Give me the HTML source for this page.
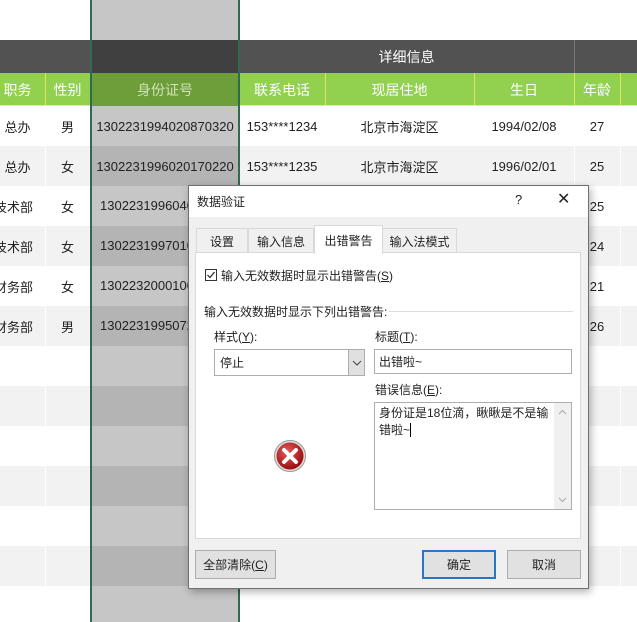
<!DOCTYPE html><html><head><meta charset="utf-8"><style>
*{margin:0;padding:0;box-sizing:border-box}
body{width:637px;height:622px;overflow:hidden;background:#fff;position:relative;font-family:"Liberation Sans","Noto Sans CJK SC",sans-serif;font-size:13px;color:#222}
.a{position:absolute}
.c{position:absolute;display:flex;align-items:center;justify-content:center;white-space:nowrap}
.btn{position:absolute;background:#e1e1e1;border:1px solid #adadad;display:flex;align-items:center;justify-content:center;font-size:12px;color:#222}
</style></head><body>
<!-- rows -->
<div class="a" style="left:0;top:146px;width:637px;height:40px;background:#f2f2f2"></div>
<div class="a" style="left:0;top:226px;width:637px;height:40px;background:#f2f2f2"></div>
<div class="a" style="left:0;top:306px;width:637px;height:40px;background:#f2f2f2"></div>
<div class="a" style="left:0;top:386px;width:637px;height:40px;background:#f2f2f2"></div>
<div class="a" style="left:0;top:466px;width:637px;height:40px;background:#f2f2f2"></div>
<div class="a" style="left:0;top:546px;width:637px;height:40px;background:#f2f2f2"></div>
<!-- column dividers in body -->
<div class="a" style="left:45px;top:106px;width:1px;height:516px;background:#fff"></div>
<div class="a" style="left:574px;top:106px;width:1px;height:516px;background:#fff"></div>
<div class="a" style="left:620px;top:106px;width:1px;height:516px;background:#fff"></div>
<!-- header -->
<div class="a" style="left:0;top:40px;width:637px;height:33px;background:#525252"></div>
<div class="a" style="left:0;top:73px;width:637px;height:33px;background:#92d050"></div>
<div class="a" style="left:574px;top:40px;width:1px;height:33px;background:#777"></div>
<div class="c" style="left:239px;top:40px;width:335px;height:33px;color:#fff;font-size:14px">详细信息</div>
<div class="a" style="left:45px;top:73px;width:1px;height:33px;background:#d8e860"></div>
<div class="a" style="left:325px;top:73px;width:1px;height:33px;background:#d8e860"></div>
<div class="a" style="left:474px;top:73px;width:1px;height:33px;background:#d8e860"></div>
<div class="a" style="left:574px;top:73px;width:1px;height:33px;background:#d8e860"></div>
<div class="a" style="left:620px;top:73px;width:1px;height:33px;background:#d8e860"></div>
<div class="a" style="left:0;top:105px;width:637px;height:1px;background:#e8f060"></div>
<!-- selected column -->
<div class="a" style="left:90px;top:0;width:150px;height:622px;background:#c6c6c6;border-left:2px solid #2f6b4f;border-right:2px solid #2f6b4f"></div>
<div class="a" style="left:92px;top:146px;width:146px;height:40px;background:#b4b4b4"></div>
<div class="a" style="left:92px;top:226px;width:146px;height:40px;background:#b4b4b4"></div>
<div class="a" style="left:92px;top:306px;width:146px;height:40px;background:#b4b4b4"></div>
<div class="a" style="left:92px;top:386px;width:146px;height:40px;background:#b4b4b4"></div>
<div class="a" style="left:92px;top:466px;width:146px;height:40px;background:#b4b4b4"></div>
<div class="a" style="left:92px;top:546px;width:146px;height:40px;background:#b4b4b4"></div>
<div class="a" style="left:92px;top:40px;width:146px;height:33px;background:#404040"></div>
<div class="a" style="left:92px;top:73px;width:146px;height:33px;background:#6e9e3a"></div>
<!-- header texts -->
<div class="c" style="left:-10px;top:73px;width:55px;height:33px;color:#fff;font-size:14px">职务</div>
<div class="c" style="left:45px;top:73px;width:45px;height:33px;color:#fff;font-size:14px">性别</div>
<div class="c" style="left:92px;top:73px;width:146px;height:33px;color:#cfe3b5;font-size:14px">身份证号</div>
<div class="c" style="left:239px;top:73px;width:86px;height:33px;color:#fff;font-size:14px">联系电话</div>
<div class="c" style="left:325px;top:73px;width:149px;height:33px;color:#fff;font-size:14px">现居住地</div>
<div class="c" style="left:474px;top:73px;width:100px;height:33px;color:#fff;font-size:14px">生日</div>
<div class="c" style="left:574px;top:73px;width:46px;height:33px;color:#fff;font-size:14px">年龄</div>
<!-- data -->
<div class="c" style="left:-10px;top:106px;width:55px;height:40px">总办</div>
<div class="c" style="left:45px;top:106px;width:45px;height:40px">男</div>
<div class="c" style="left:92px;top:106px;width:146px;height:40px">130223199402087032​0</div>
<div class="c" style="left:239px;top:106px;width:86px;height:40px">153****1234</div>
<div class="c" style="left:325px;top:106px;width:149px;height:40px">北京市海淀区</div>
<div class="c" style="left:474px;top:106px;width:100px;height:40px">1994/02/08</div>
<div class="c" style="left:574px;top:106px;width:46px;height:40px">27</div>
<div class="c" style="left:-10px;top:146px;width:55px;height:40px">总办</div>
<div class="c" style="left:45px;top:146px;width:45px;height:40px">女</div>
<div class="c" style="left:92px;top:146px;width:146px;height:40px">130223199602017022​0</div>
<div class="c" style="left:239px;top:146px;width:86px;height:40px">153****1235</div>
<div class="c" style="left:325px;top:146px;width:149px;height:40px">北京市海淀区</div>
<div class="c" style="left:474px;top:146px;width:100px;height:40px">1996/02/01</div>
<div class="c" style="left:574px;top:146px;width:46px;height:40px">25</div>
<div class="c" style="left:-18px;top:186px;width:63px;height:40px">技术部</div>
<div class="c" style="left:45px;top:186px;width:45px;height:40px">女</div>
<div class="a" style="left:100px;top:198px">1302231996040</div>
<div class="c" style="left:574px;top:186px;width:46px;height:40px">25</div>
<div class="c" style="left:-18px;top:226px;width:63px;height:40px">技术部</div>
<div class="c" style="left:45px;top:226px;width:45px;height:40px">女</div>
<div class="a" style="left:100px;top:238px">1302231997010</div>
<div class="c" style="left:574px;top:226px;width:46px;height:40px">24</div>
<div class="c" style="left:-18px;top:266px;width:63px;height:40px">财务部</div>
<div class="c" style="left:45px;top:266px;width:45px;height:40px">女</div>
<div class="a" style="left:100px;top:278px">1302232000100</div>
<div class="c" style="left:574px;top:266px;width:46px;height:40px">21</div>
<div class="c" style="left:-18px;top:306px;width:63px;height:40px">财务部</div>
<div class="c" style="left:45px;top:306px;width:45px;height:40px">男</div>
<div class="a" style="left:100px;top:318px">1302231995072</div>
<div class="c" style="left:574px;top:306px;width:46px;height:40px">26</div>
<!-- dialog -->
<div class="a" style="left:188px;top:185px;width:401px;height:404px;background:#f0f0f0;border:1px solid #707070;box-shadow:2px 3px 8px rgba(0,0,0,.3)">
 <div class="a" style="left:0;top:0;width:399px;height:31px;background:#fff"></div>
 <div class="a" style="left:8px;top:7px;font-size:12px">数据验证</div>
 <div class="a" style="left:326px;top:6px;font-size:13px">?</div>
 <div class="a" style="left:368px;top:3px;font-size:16px">✕</div>
 <!-- tabs -->
 <div class="c" style="left:7px;top:42px;width:52px;height:25px;border:1px solid #d9d9d9;border-bottom:none;font-size:12px;background:#f0f0f0">设置</div>
 <div class="c" style="left:59px;top:42px;width:66px;height:25px;border:1px solid #d9d9d9;border-bottom:none;font-size:12px">输入信息</div>
 <div class="c" style="left:193px;top:42px;width:75px;height:25px;border:1px solid #d9d9d9;border-bottom:none;font-size:12px">输入法模式</div>
 <div class="a" style="left:6px;top:66px;width:386px;height:287px;background:#fff;border:1px solid #d9d9d9"></div>
 <div class="c" style="left:125px;top:39px;width:69px;height:29px;border:1px solid #d9d9d9;border-bottom:none;background:#fff;font-size:12px">出错警告</div>
 <div class="a" style="left:16px;top:83px;width:12px;height:12px;border:1px solid #333;background:#fff"><svg width="10" height="10" style="position:absolute;left:0;top:0"><path d="M1.5 5 L4 7.5 L8.5 2" stroke="#222" stroke-width="1.2" fill="none"/></svg></div>
 <div class="a" style="left:32px;top:81px;font-size:12px">输入无效数据时显示出错警告(<u>S</u>)</div>
 <div class="a" style="left:15px;top:117px;font-size:12px">输入无效数据时显示下列出错警告:</div>
 <div class="a" style="left:200px;top:125px;width:184px;height:1px;background:#dcdcdc"></div>
 <div class="a" style="left:25px;top:142px;font-size:12px">样式(<u>Y</u>):</div>
 <div class="a" style="left:25px;top:163px;width:151px;height:27px;border:1px solid #adadad;background:#e9e9e9"></div>
 <div class="a" style="left:26px;top:164px;width:133px;height:25px;background:#fff"></div>
 <div class="a" style="left:31px;top:168px;font-size:12px">停止</div>
 <div class="a" style="left:159px;top:164px;width:16px;height:25px;background:#e0e0e0;border-left:1px solid #adadad"><svg width="16" height="25"><path d="M4 11 L8 15 L12 11" stroke="#444" fill="none"/></svg></div>
 <div class="a" style="left:186px;top:142px;font-size:12px">标题(<u>T</u>):</div>
 <div class="a" style="left:185px;top:163px;width:198px;height:25px;border:1px solid #adadad;background:#fff"></div>
 <div class="a" style="left:190px;top:167px;font-size:12px">出错啦~</div>
 <div class="a" style="left:186px;top:195px;font-size:12px">错误信息(<u>E</u>):</div>
 <div class="a" style="left:185px;top:216px;width:198px;height:108px;border:1px solid #adadad;background:#fff"></div>
 <div class="a" style="left:365px;top:217px;width:17px;height:106px;background:#f0f0f0"><svg width="17" height="106"><path d="M5 11 L8.5 7.5 L12 11 M5 95 L8.5 98.5 L12 95" stroke="#aaa" fill="none"/></svg></div>
 <div class="a" style="left:190px;top:219px;width:176px;font-size:12px;line-height:17px">身份证是18位滴，瞅瞅是不是输错啦~<span style="border-left:1px solid #000"></span></div>
 <svg class="a" style="left:84px;top:253px" width="34" height="34"><defs><radialGradient id="g" cx="40%" cy="35%" r="65%"><stop offset="0" stop-color="#e85a5a"/><stop offset="1" stop-color="#9a0e0e"/></radialGradient></defs><circle cx="17" cy="17" r="15.5" fill="#ddd" stroke="#999" stroke-width="1"/><circle cx="17" cy="17" r="13.5" fill="url(#g)"/><path d="M11 11 L23 23 M23 11 L11 23" stroke="#fff" stroke-width="4" stroke-linecap="round"/></svg>
 <div class="btn" style="left:6px;top:364px;width:81px;height:29px">全部清除(<u>C</u>)</div>
 <div class="btn" style="left:233px;top:364px;width:74px;height:29px;border:2px solid #2a76c6">确定</div>
 <div class="btn" style="left:318px;top:364px;width:74px;height:29px">取消</div>
</div>
</body></html>
